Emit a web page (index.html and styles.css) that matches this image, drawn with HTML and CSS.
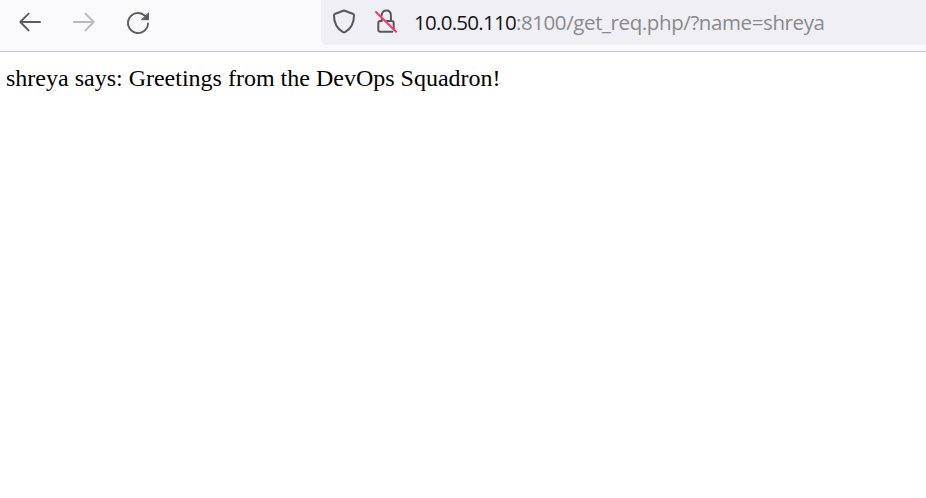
FILE: index.html
```html
<!DOCTYPE html>
<html lang="en">
<head>
<meta charset="utf-8">
<title>Greetings</title>
<link rel="stylesheet" href="styles.css">
</head>
<body>
<header class="toolbar">
  <nav class="controls">
    <svg class="icon" viewBox="0 0 24 24"><path d="M22 12H2.500M10.600 3.700 2.300 12l8.300 8.300"/></svg>
    <svg class="icon disabled" viewBox="0 0 24 24"><path d="M2 12h19.500M13.400 3.700l8.300 8.300-8.300 8.300"/></svg>
    <svg class="icon" viewBox="0 0 24 24"><path d="M22 13.500A10 10 0 1 1 19 5.900"/><path class="solid" d="M22.500 3.300v6.400h-6.600z"/></svg>
  </nav>
  <div class="address">
    <svg class="icon shield" viewBox="0 0 24 24"><path d="M12 1.500 20.700 4.700Q22 5.200 22 6.600C22 13.500 19 19.500 13.400 22.900Q12 23.700 10.600 22.900C5 19.500 2 13.500 2 6.600Q2 5.200 3.300 4.700Z"/></svg>
    <svg class="icon lock" viewBox="0 0 24 24"><path d="M7.600 6.500C8 3.400 9.600 1.600 12.200 1.600c2.900 0 4.700 2 4.700 4.800V11.800M12.800 11.900h4.900q2 0 2 2v6.500M18.300 22.700h-12q-2 0-2-2v-6.800q0-2 2-2h1.400V10"/><path class="slash" d="m2 3 20 19.800"/></svg>
    <div class="url"><span class="host">10.0.50.110</span><span class="path">:8100/get_req.php/?name=shreya</span></div>
  </div>
</header>
<main class="page">shreya says: Greetings from the DevOps Squadron!</main>
</body>
</html>
```
FILE: styles.css
```css
body {
  margin: 0;
  background: #fff;
  overflow: hidden;
}
.toolbar {
  display: flex;
  justify-content: space-between;
  box-sizing: border-box;
  height: 52px;
  background: #f9f9fb;
  border-bottom: 1px solid #c6c6ca;
}
.controls {
  display: flex;
  gap: 30px;
  padding: 10px 0 0 18px;
}
.icon {
  display: block;
  flex: none;
  width: 24px;
  height: 24px;
  fill: none;
  stroke: #5b5b66;
  stroke-width: 1.9;
  stroke-linecap: round;
  stroke-linejoin: round;
  overflow: visible;
}
.disabled { stroke: #b9b9be; }
.solid { fill: #5b5b66; stroke-width: 1; }
.address {
  display: flex;
  box-sizing: border-box;
  width: 605px;
  height: 45px;
  padding: 9px 0 0 11px;
  background: #f0eff4;
  border-radius: 0 0 0 6px;
}
.address .icon { stroke: #58585c; stroke-width: 2; }
.lock { margin-left: 18px; }
.address .slash { stroke: #fa3a66; }
.url {
  margin: -1px 0 0 16px;
  font: 20.5px/28px "Open Sans", "Noto Sans", sans-serif;
  white-space: nowrap;
  color: #8a8a8e;
}
.host { color: #15141a; letter-spacing: -0.73px; }
.path { letter-spacing: -0.4px; }
.page {
  padding: 12px 6px;
  font: 24px/28px "Liberation Serif", "Times New Roman", serif;
  color: #000;
}
```
